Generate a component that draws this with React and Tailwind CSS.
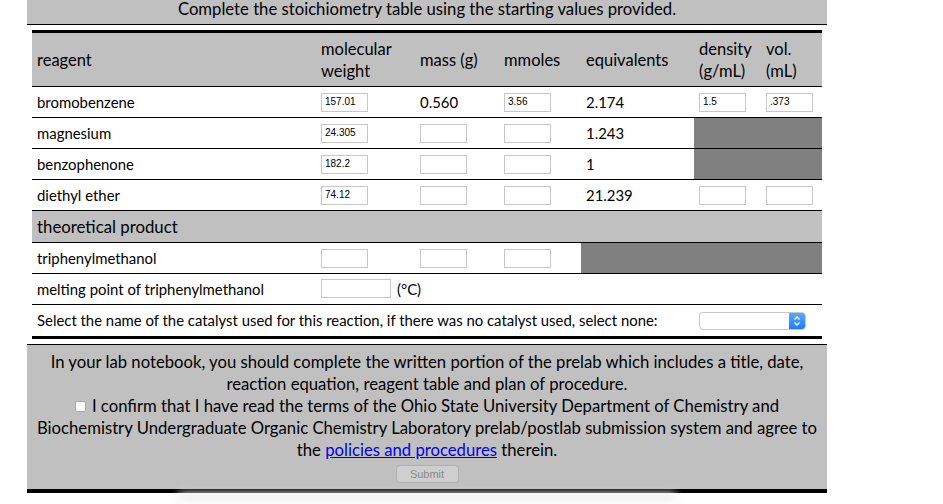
import React from "react";

const F = { fontFamily: "Lato, 'Open Sans', sans-serif" };

function Box({ v = "", w = "w-[47px]" }) {
  return (
    <div
      className={`${w} h-[19px] border border-[#c8c8c8] bg-white flex items-center pl-[3px] text-[10px] leading-none text-black`}
      style={{ fontFamily: "'Liberation Sans', Arial, sans-serif" }}
    >
      {v}
    </div>
  );
}

const rows = [
  { name: "bromobenzene", mw: "157.01", mass: "0.560", massIn: false, mm: "3.56", eq: "2.174", dens: "1.5", vol: ".373", dark: false },
  { name: "magnesium", mw: "24.305", massIn: true, mm: "", eq: "1.243", dark: true },
  { name: "benzophenone", mw: "182.2", massIn: true, mm: "", eq: "1", dark: true },
  { name: "diethyl ether", mw: "74.12", massIn: true, mm: "", eq: "21.239", dens: "", vol: "", dark: false },
];

export default function App() {
  return (
    <div className="w-[943px] h-[504px] bg-white overflow-hidden text-black" style={F}>
      <div className="ml-[27px] w-[800px]">
        <div className="h-[25px] bg-[#c0c0c0] border-b border-black text-center text-[16.7px] leading-[19px] whitespace-nowrap">
          Complete the stoichiometry table using the starting values provided.
        </div>
        <div className="px-[5px] pt-[5px]">
          <table className="w-[790px] border-collapse table-fixed border-t-[3px] border-black text-[14.9px]">
            <colgroup>
              <col className="w-[284px]" />
              <col className="w-[99px]" />
              <col className="w-[84px]" />
              <col className="w-[82px]" />
              <col className="w-[113px]" />
              <col className="w-[67px]" />
              <col className="w-[61px]" />
            </colgroup>
            <tbody>
              <tr className="bg-[#c0c0c0] border-b border-black h-[55px] text-[16.5px] leading-[22px]">
                <td className="pl-[5px]">reagent</td>
                <td className="pl-[5px]">molecular<br />weight</td>
                <td className="pl-[5px]">mass (g)</td>
                <td className="pl-[5px]">mmoles</td>
                <td className="pl-[5px] whitespace-nowrap">equivalents</td>
                <td className="pl-[5px] whitespace-nowrap">density<br />(g/mL)</td>
                <td className="pl-[5px]">vol.<br />(mL)</td>
              </tr>
              {rows.map((r) => (
                <tr key={r.name} className="border-b border-black h-[31px]">
                  <td className="pl-[5px]">{r.name}</td>
                  <td className="pl-[5px]"><Box v={r.mw} /></td>
                  <td className="pl-[5px]">{r.massIn ? <Box /> : r.mass}</td>
                  <td className="pl-[5px]"><Box v={r.mm} /></td>
                  <td className="pl-[5px]">{r.eq}</td>
                  {r.dark ? (
                    <td colSpan={2} className="bg-[#808080]"></td>
                  ) : (
                    <>
                      <td className="pl-[5px]"><Box v={r.dens} /></td>
                      <td className="pl-[5px]"><Box v={r.vol} /></td>
                    </>
                  )}
                </tr>
              ))}
              <tr className="bg-[#c0c0c0] border-b border-black h-[32px] text-[16.8px]">
                <td colSpan={7} className="pl-[5px]">theoretical product</td>
              </tr>
              <tr className="border-b border-black h-[31px]">
                <td className="pl-[5px]">triphenylmethanol</td>
                <td className="pl-[5px]"><Box /></td>
                <td className="pl-[5px]"><Box /></td>
                <td className="pl-[5px]"><Box /></td>
                <td colSpan={3} className="bg-[#808080]"></td>
              </tr>
              <tr className="border-b border-black h-[31px]">
                <td className="pl-[5px]">melting point of triphenylmethanol</td>
                <td colSpan={6} className="pl-[5px]">
                  <div className="flex items-center gap-[6px]">
                    <Box w="w-[70px]" />
                    <span>(°C)</span>
                  </div>
                </td>
              </tr>
              <tr className="border-b-[3px] border-black h-[33px]">
                <td colSpan={5} className="pl-[5px] whitespace-nowrap">
                  Select the name of the catalyst used for this reaction, if there was no catalyst used, select none:
                </td>
                <td colSpan={2} className="pl-[5px]">
                  <div className="w-[107px] h-[18px] rounded-[4px] border border-[#c8c8c8] bg-white flex justify-end overflow-hidden">
                    <div className="w-[16px] h-full bg-gradient-to-b from-[#5aa7ff] to-[#1c7cf4] flex items-center justify-center">
                      <svg width="8" height="12" viewBox="0 0 8 12" fill="none" stroke="white" strokeWidth="1.4">
                        <path d="M1.5 4.5 L4 2 L6.5 4.5" />
                        <path d="M1.5 7.5 L4 10 L6.5 7.5" />
                      </svg>
                    </div>
                  </div>
                </td>
              </tr>
            </tbody>
          </table>
        </div>
        <div className="mt-[5px] bg-[#c0c0c0] border-t border-black border-b-[4px] text-center text-[16.7px] leading-[22px] pt-[6px] pb-[6px] whitespace-nowrap">
          <div>In your lab notebook, you should complete the written portion of the prelab which includes a title, date,</div>
          <div>reaction equation, reagent table and plan of procedure.</div>
          <div className="flex items-center justify-center">
            <span className="inline-block w-[11px] h-[11px] rounded-[2px] bg-white border border-[#a8a8a8] mr-[6px]"></span>
            <span>I confirm that I have read the terms of the Ohio State University Department of Chemistry and</span>
          </div>
          <div>Biochemistry Undergraduate Organic Chemistry Laboratory prelab/postlab submission system and agree to</div>
          <div>
            the <span className="text-[#0000ee] underline">policies and procedures</span> therein.
          </div>
          <div className="flex justify-center mt-[4px]">
            <div
              className="w-[63px] h-[18px] rounded-[4px] border border-[#b0b0b0] bg-[#cfcfcf] text-[#8a8a8a] text-[11px] flex items-center justify-center"
              style={{ fontFamily: "'Liberation Sans', Arial, sans-serif" }}
            >
              Submit
            </div>
          </div>
        </div>
        <div className="h-[12px] bg-gradient-to-b from-[#e8e8e8] to-white mx-[150px] rounded-full blur-[4px]"></div>
      </div>
    </div>
  );
}
